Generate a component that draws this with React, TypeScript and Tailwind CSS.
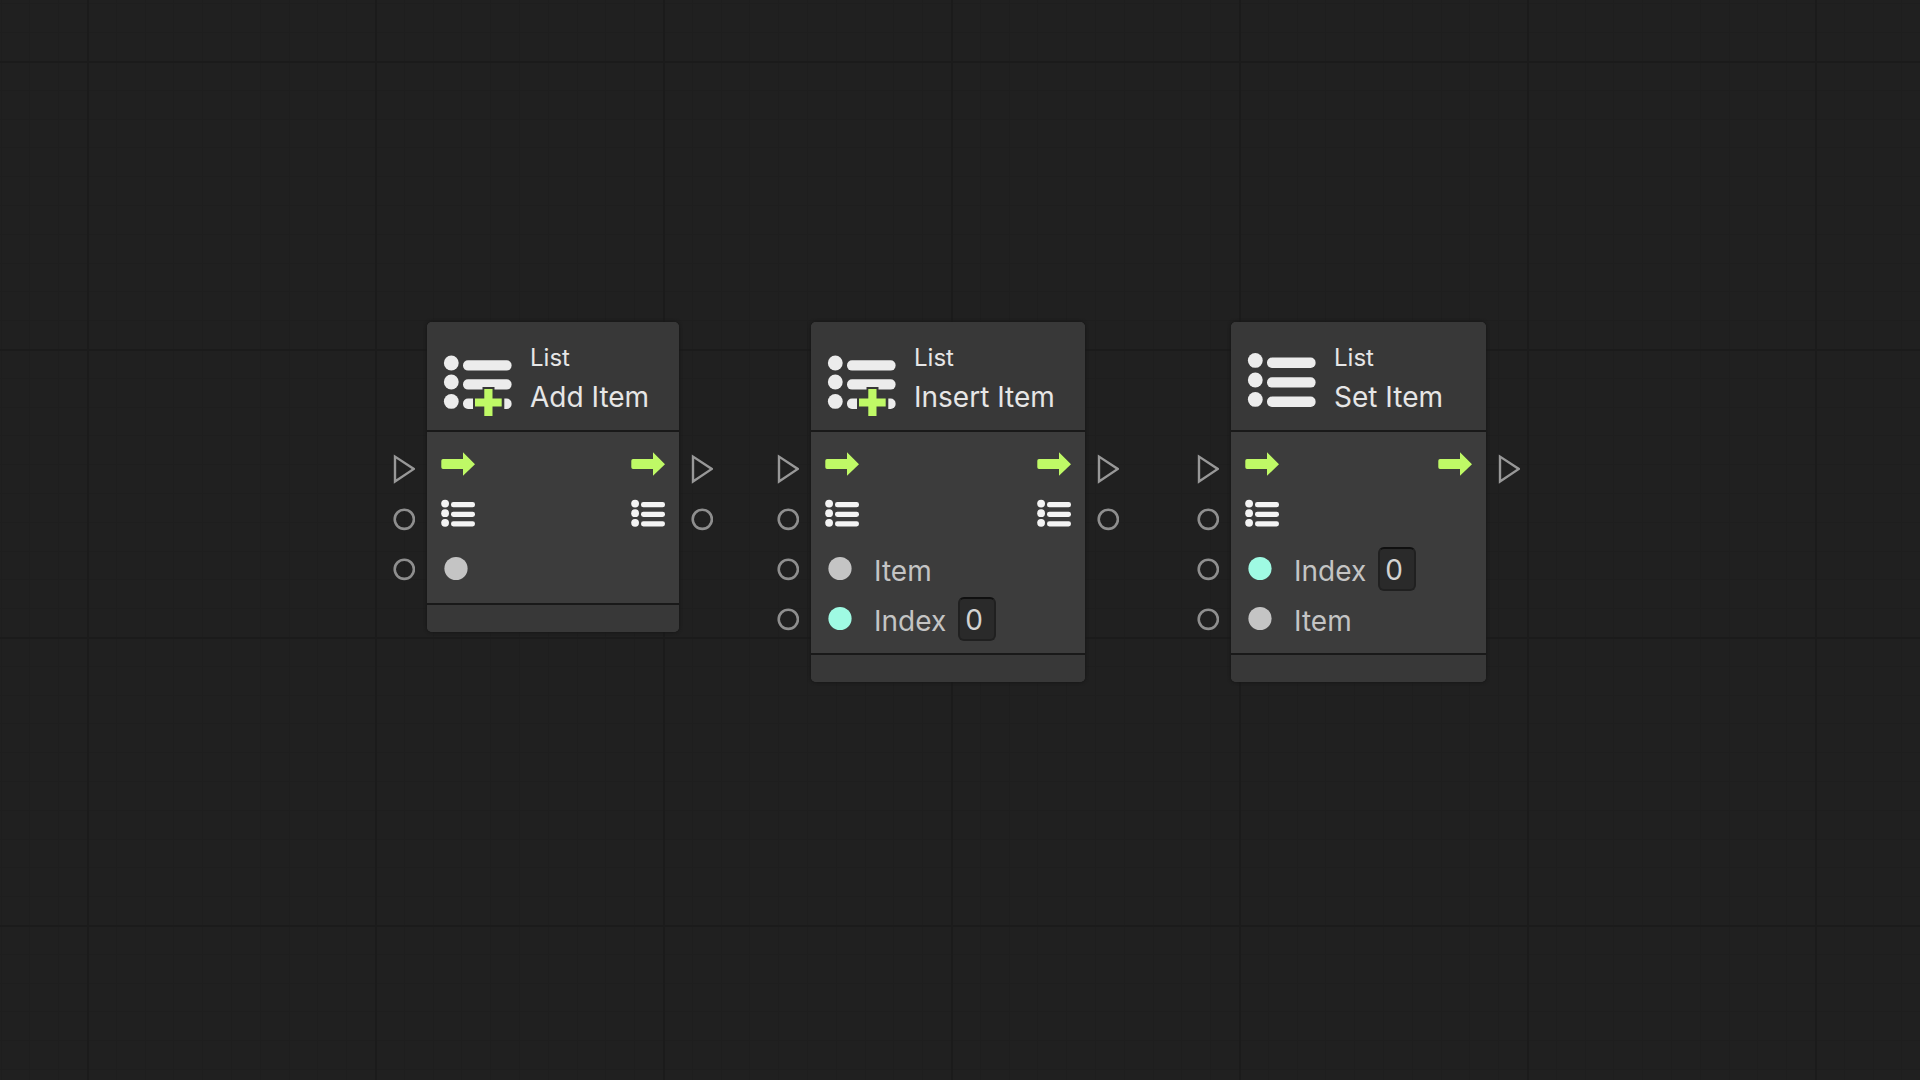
import { useId } from "react";
import clsx from "clsx";

type IconName = "flow" | "list" | "object" | "integer";

type Input = { icon: IconName; label?: string; value?: number };

type NodeData = {
  title: string;
  plus?: boolean;
  place: string;
  inputs: Input[];
  outputs: IconName[];
};

const nodes: NodeData[] = [
  {
    title: "Add Item",
    plus: true,
    place: "left-[427px] w-[252px]",
    inputs: [{ icon: "flow" }, { icon: "list" }, { icon: "object" }],
    outputs: ["flow", "list"],
  },
  {
    title: "Insert Item",
    plus: true,
    place: "left-[811px] w-[274px]",
    inputs: [
      { icon: "flow" },
      { icon: "list" },
      { icon: "object", label: "Item" },
      { icon: "integer", label: "Index", value: 0 },
    ],
    outputs: ["flow", "list"],
  },
  {
    title: "Set Item",
    place: "left-[1231px] w-[255px]",
    inputs: [
      { icon: "flow" },
      { icon: "list" },
      { icon: "integer", label: "Index", value: 0 },
      { icon: "object", label: "Item" },
    ],
    outputs: ["flow"],
  },
];

const minorLines = [29, 58, 86, 115, 144, 173, 202, 230, 259];

function Grid() {
  return (
    <svg className="absolute inset-0 h-full w-full" aria-hidden="true">
      <defs>
        <pattern id="grid" x="87" y="61" width="288" height="288" patternUnits="userSpaceOnUse">
          {minorLines.map((n) => (
            <path key={n} d={`M${n} 0h1v288h-1zM0 ${n}h288v1h-288z`} fill="#1e1e1e" />
          ))}
          <path d="M0 0h2v288h-2zM0 0h288v2h-288z" fill="#1b1b1b" />
        </pattern>
      </defs>
      <rect width="100%" height="100%" fill="url(#grid)" />
    </svg>
  );
}

function HeaderIcon({ plus }: { plus?: boolean }) {
  const rows = plus ? [19, 38, 57.4] : [16.4, 36, 55.4];
  return (
    <svg className="h-16 w-18 shrink-0" viewBox="0 0 72 64" overflow="visible" aria-hidden="true">
      {rows.map((y) => (
        <g key={y} fill="#ececec">
          <circle cx="10.3" cy={y} r="7.4" />
          <rect x="22" y={y - 2.8} width="48.6" height="10.4" rx="5" />
        </g>
      ))}
      {plus && (
        <>
          <path d="M41.5 43h12v9.8h9.8V66H32V52.8h9.5z" fill="#383838" />
          <path d="M43.3 45h8.2v9.4h9.2v8.2h-9.2V72h-8.2v-9.4H34v-8.2h9.3z" fill="#bff966" />
        </>
      )}
    </svg>
  );
}

function RowIcon({ name }: { name: IconName }) {
  return (
    <svg className="h-10 w-[34px] shrink-0" viewBox="0 0 34 40" aria-hidden="true">
      {name === "flow" && (
        <path d="M2 10h20V3.2L34 15.2 22 26.8V20H2q-1.7 0-1.7-1.7v-6.6Q.3 10 2 10z" fill="#bff966" />
      )}
      {name === "list" &&
        [4.6, 14.2, 23.8].map((y) => (
          <g key={y} fill="#f4f4f4">
            <circle cx="4.1" cy={y} r="3.9" />
            <rect x="10" y={y - 1.5} width="24" height="5.2" rx="2.4" />
          </g>
        ))}
      {name === "object" && <circle cx="15" cy="19.5" r="11.6" fill="#c4c4c4" />}
      {name === "integer" && <circle cx="15" cy="19.5" r="11.6" fill="#9ffae3" />}
    </svg>
  );
}

function Port({ flow }: { flow: boolean }) {
  return (
    <svg className="h-[30px] w-[22px] shrink-0" viewBox="0 0 22 30" fill="none" aria-hidden="true">
      {flow ? (
        <path d="M2 2.6v24.8L20.8 14.9z" stroke="#989898" strokeWidth="2.4" />
      ) : (
        <circle cx="11.3" cy="15.3" r="9.6" stroke="#8e8e8e" strokeWidth="2.6" />
      )}
    </svg>
  );
}

function Row({ input, output }: { input: Input; output?: IconName }) {
  const id = useId();
  return (
    <div className="-mx-[34px] flex h-[50px] items-center justify-between">
      <div className="flex items-center">
        <Port flow={input.icon === "flow"} />
        <div className="flex items-center pl-[26px]">
          <RowIcon name={input.icon} />
          {input.label && (
            <label htmlFor={id} className="pt-[3px] pl-[15px] text-[28px] leading-8">
              {input.label}
            </label>
          )}
          {input.value !== undefined && (
            <input
              id={id}
              defaultValue={input.value}
              className="ml-3 h-11 w-[38px] rounded-md border-2 border-[#202020] border-t-[#101010] bg-[#2a2a2a] pt-0.5 pl-[5px] text-[28px] text-[#d2d2d2] outline-none"
            />
          )}
        </div>
      </div>
      {output && (
        <div className="flex items-center gap-[26px]">
          <RowIcon name={output} />
          <Port flow={output === "flow"} />
        </div>
      )}
    </div>
  );
}

function Node({ node }: { node: NodeData }) {
  return (
    <section
      className={clsx(
        "absolute top-[322px] rounded-[5px] bg-[#3c3c3c] shadow-[0_0_3px_1px_#181818]",
        node.place
      )}
    >
      <header className="flex h-[108px] items-center gap-[17px] rounded-t-[5px] bg-[#383838] pl-[14px]">
        <HeaderIcon plus={node.plus} />
        <div className="pt-1 whitespace-nowrap text-[#e6e6e6]">
          <p className="text-2xl leading-[38px]">List</p>
          <h2 className="text-[28px] leading-10">{node.title}</h2>
        </div>
      </header>
      <div className="border-y-2 border-[#191919] pt-3 pb-[9px]">
        {node.inputs.map((input, i) => (
          <Row key={i} input={input} output={node.outputs[i]} />
        ))}
      </div>
      <footer className="h-[27px] rounded-b-[5px] bg-[#383838]" />
    </section>
  );
}

function App() {
  return (
    <main className="relative min-h-screen overflow-hidden bg-[#202020] font-['Inter',sans-serif] text-[#c4c4c4]">
      <Grid />
      {nodes.map((node) => (
        <Node key={node.title} node={node} />
      ))}
    </main>
  );
}

export default App;
